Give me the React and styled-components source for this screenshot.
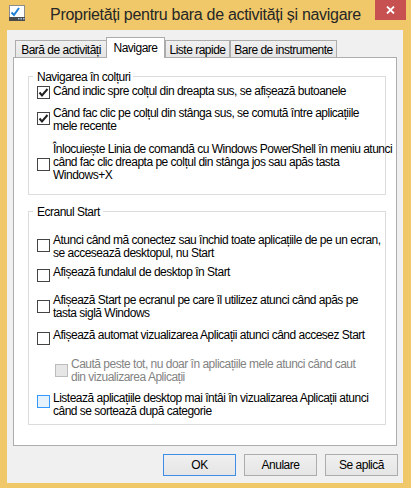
import React from 'react';
import styled, { createGlobalStyle } from 'styled-components';

const FONT = `"Liberation Sans", Arial, sans-serif`;
const TIGHT = '-0.5px';

const GlobalStyle = createGlobalStyle`
	html,
	body {
		margin: 0;
		padding: 0;
		background: #f0c86a;
	}
`;

const Window = styled.div`
	width: 411px;
	height: 488px;
	box-sizing: border-box;
	display: flex;
	flex-direction: column;
	background: #f0c86a;
	font-family: ${FONT};
	overflow: hidden;
`;

const TitleBar = styled.div`
	display: flex;
	height: 30px;
	flex-shrink: 0;
`;

const IconSlot = styled.div`
	width: 36px;
	box-sizing: border-box;
	padding: 5px 0 0 9px;
`;

const Title = styled.div`
	flex: 1;
	text-align: center;
	font-size: 16px;
	line-height: 29px;
	color: #262626;
	white-space: nowrap;
	letter-spacing: -0.3px;
`;

const CloseSlot = styled.div`
	width: 36px;
`;

const CloseButton = styled.div`
	width: 31px;
	height: 20px;
	background: #c75050;
	display: flex;
	align-items: center;
	justify-content: center;
`;

const Body = styled.div`
	flex: 1;
	margin: 0 8px 5px 7px;
	padding: 7px 6px 7px;
	background: #f0f0f0;
	display: flex;
	flex-direction: column;
	box-sizing: border-box;
`;

const TabStrip = styled.div`
	display: flex;
	align-items: flex-end;
	height: 20px;
	padding-left: 2px;
	position: relative;
	z-index: 1;
`;

const Tab = styled.div`
	box-sizing: border-box;
	width: ${(p) => p.$w}px;
	height: ${(p) => (p.$active ? 21 : 17)}px;
	margin: ${(p) => (p.$active ? '0 0 -1px -1px' : '0')};
	padding-top: ${(p) => (p.$active ? 2 : 1)}px;
	border: 1px solid #acacac;
	border-bottom: none;
	background: ${(p) =>
		p.$active ? '#fff' : 'linear-gradient(#f0f0f0, #e5e5e5)'};
	font-size: 12px;
	line-height: 16px;
	letter-spacing: ${TIGHT};
	text-align: center;
	white-space: nowrap;
	color: #000;
`;

const Panel = styled.div`
	height: 389px;
	box-sizing: border-box;
	border: 1px solid #adadad;
	background: #fff;
	padding: 10px 10px 0 14px;
`;

const Group = styled.fieldset`
	margin: ${(p) => p.$mt}px 0 0;
	padding: 0 0 ${(p) => p.$pb}px 8px;
	border: 1px solid #dcdcdc;
	min-width: 0;
`;

const Legend = styled.legend`
	margin-left: -4px;
	padding: 3px 3px 0 4px;
	font-size: 12px;
	line-height: 13px;
	letter-spacing: ${TIGHT};
	color: #000;
`;

const Row = styled.div`
	display: flex;
	align-items: center;
	margin: ${(p) => p.$mt}px 0 0 ${(p) => p.$indent || 0}px;
`;

const Box = styled.span`
	width: 13px;
	height: 13px;
	box-sizing: border-box;
	flex-shrink: 0;
	margin: ${(p) => p.$shift}px 3px ${(p) => -p.$shift}px 0;
	border: 1px solid
		${(p) =>
			p.$state === 'disabled'
				? '#bcbcbc'
				: p.$state === 'hover'
				? '#3399ff'
				: '#444'};
	background: ${(p) =>
		p.$state === 'disabled'
			? '#e6e6e6'
			: p.$state === 'hover'
			? '#e5f1fb'
			: '#fff'};
	display: flex;
	align-items: center;
	justify-content: center;
`;

const Label = styled.span`
	font-size: 12px;
	line-height: 13px;
	letter-spacing: ${TIGHT};
	white-space: nowrap;
	color: ${(p) => (p.$disabled ? '#838383' : '#000')};
`;

const ButtonRow = styled.div`
	display: flex;
	justify-content: flex-end;
	gap: 8px;
	margin: 8px -1px 0 0;
`;

const Button = styled.button`
	width: 73px;
	height: 22px;
	box-sizing: border-box;
	padding: 0;
	border: 1px solid ${(p) => (p.$default ? '#3d8ee6' : '#acacac')};
	background: linear-gradient(#f0f0f0, #e5e5e5);
	font-family: ${FONT};
	font-size: 12px;
	letter-spacing: ${TIGHT};
	color: #000;
`;

const AppIcon = () => (
	<svg width='16' height='16' viewBox='0 0 16 16'>
		<rect x='0.5' y='0.5' width='15' height='15' fill='#fff' stroke='#8c8c8c' />
		<path
			d='M2.5 7.5 L5 10 L10 3'
			fill='none'
			stroke='#1f7fd6'
			strokeWidth='2'
		/>
		<rect x='0' y='12' width='16' height='4' fill='#4b4b4b' />
		<rect x='9' y='13' width='1.5' height='1.5' fill='#9cc3e6' />
		<rect x='11.5' y='13' width='1.5' height='1.5' fill='#9cc3e6' />
		<rect x='14' y='13' width='1.5' height='1.5' fill='#9cc3e6' />
	</svg>
);

const CloseIcon = () => (
	<svg width='9' height='8' viewBox='0 0 9 8'>
		<path d='M1 0.5 L8 7.5 M8 0.5 L1 7.5' stroke='#fff' strokeWidth='1.8' />
	</svg>
);

const Check = () => (
	<svg width='11' height='11' viewBox='0 0 11 11'>
		<path d='M1.5 5.5 L4 8.5 L9.5 2' fill='none' stroke='#222' strokeWidth='2' />
	</svg>
);

const Option = ({ mt, indent, shift = 0, state, checked, lines }) => (
	<Row $mt={mt} $indent={indent}>
		<Box $shift={shift} $state={state}>
			{checked && <Check />}
		</Box>
		<Label $disabled={state === 'disabled'}>
			{lines.map((l, i) => (
				<React.Fragment key={i}>
					{i > 0 && <br />}
					{l}
				</React.Fragment>
			))}
		</Label>
	</Row>
);

const App = () => {
	return (
		<Window>
			<GlobalStyle />
			<TitleBar>
				<IconSlot>
					<AppIcon />
				</IconSlot>
				<Title>Proprietăți pentru bara de activități și navigare</Title>
				<CloseSlot>
					<CloseButton>
						<CloseIcon />
					</CloseButton>
				</CloseSlot>
			</TitleBar>
			<Body>
				<TabStrip>
					<Tab $w={92}>Bară de activități</Tab>
					<Tab $w={59} $active>
						Navigare
					</Tab>
					<Tab $w={65}>Liste rapide</Tab>
					<Tab $w={107}>Bare de instrumente</Tab>
				</TabStrip>
				<Panel>
					<Group $mt={0} $pb={12}>
						<Legend>Navigarea în colțuri</Legend>
						<Option
							mt={1}
							shift={1}
							checked
							lines={['Când indic spre colțul din dreapta sus, se afișează butoanele']}
						/>
						<Option
							mt={9}
							shift={-2}
							checked
							lines={[
								'Când fac clic pe colțul din stânga sus, se comută între aplicațiile',
								'mele recente',
							]}
						/>
						<Option
							mt={10}
							shift={2}
							lines={[
								'Înlocuiește Linia de comandă cu Windows PowerShell în meniu atunci',
								'când fac clic dreapta pe colțul din stânga jos sau apăs tasta',
								'Windows+X',
							]}
						/>
					</Group>
					<Group $mt={8} $pb={6}>
						<Legend>Ecranul Start</Legend>
						<Option
							mt={15}
							shift={-2}
							lines={[
								'Atunci când mă conectez sau închid toate aplicațiile de pe un ecran,',
								'se accesează desktopul, nu Start',
							]}
						/>
						<Option mt={6} shift={3} lines={['Afișează fundalul de desktop în Start']} />
						<Option
							mt={15}
							shift={-1}
							lines={[
								'Afișează Start pe ecranul pe care îl utilizez atunci când apăs pe',
								'tasta siglă Windows',
							]}
						/>
						<Option
							mt={9}
							shift={3}
							lines={['Afișează automat vizualizarea Aplicații atunci când accesez Start']}
						/>
						<Option
							mt={16}
							indent={18}
							shift={-1}
							state='disabled'
							lines={[
								'Caută peste tot, nu doar în aplicațiile mele atunci când caut',
								'din vizualizarea Aplicații',
							]}
						/>
						<Option
							mt={8}
							shift={-4}
							state='hover'
							lines={[
								'Listează aplicațiile desktop mai întâi în vizualizarea Aplicații atunci',
								'când se sortează după categorie',
							]}
						/>
					</Group>
				</Panel>
				<ButtonRow>
					<Button $default>OK</Button>
					<Button>Anulare</Button>
					<Button>Se aplică</Button>
				</ButtonRow>
			</Body>
		</Window>
	);
};

export default App;
